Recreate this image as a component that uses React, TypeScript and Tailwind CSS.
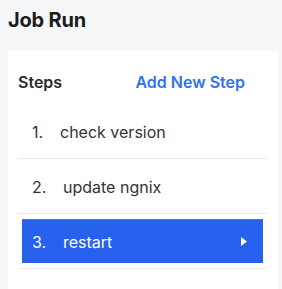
const steps = ["check version", "update ngnix", "restart"];

const App = () => {
  const active = 2;
  return (
    <div className="w-[282px] h-[289px] bg-[#f5f6f8] overflow-hidden font-['Inter',sans-serif]">
      <h1 className="pl-[8px] pt-[8px] text-[20px] font-bold text-[#1c1c1c] leading-[24px] tracking-[-0.2px]">
        Job Run
      </h1>
      <div className="ml-[8px] mr-[4px] mt-[19px] h-[260px] bg-white pt-[20px]">
        <div className="flex items-center justify-between pl-[10px] pr-[33px] h-[22px]">
          <span className="text-[16px] font-semibold text-[#2b2b2b]">Steps</span>
          <button className="text-[16px] font-semibold text-[#3172f0]">Add New Step</button>
        </div>
        <ul className="mt-[11px] mx-[10px] w-[249px]">
          {steps.map((s, i) => (
            <li key={s} className="border-b border-[#e8e9eb] py-[5px]">
              {i === active ? (
                <div className="mx-[4px] h-[44px] bg-[#2762ee] border-t border-[#6b7280] flex items-center text-white text-[16px] pl-[10px] pr-[16px]">
                  <span className="w-[31px]">{i + 1}.</span>
                  <span className="flex-1">{s}</span>
                  <svg width="6" height="9" viewBox="0 0 6 9">
                    <path d="M0 0 L6 4.5 L0 9 Z" fill="white" />
                  </svg>
                </div>
              ) : (
                <div className="h-[44px] pt-[2px] flex items-center text-[16px] text-[#333] pl-[14px]">
                  <span className="w-[28px]">{i + 1}.</span>
                  <span className={i === 1 ? "pl-[3px]" : ""}>{s}</span>
                </div>
              )}
            </li>
          ))}
        </ul>
      </div>
    </div>
  );
};

export default App;
